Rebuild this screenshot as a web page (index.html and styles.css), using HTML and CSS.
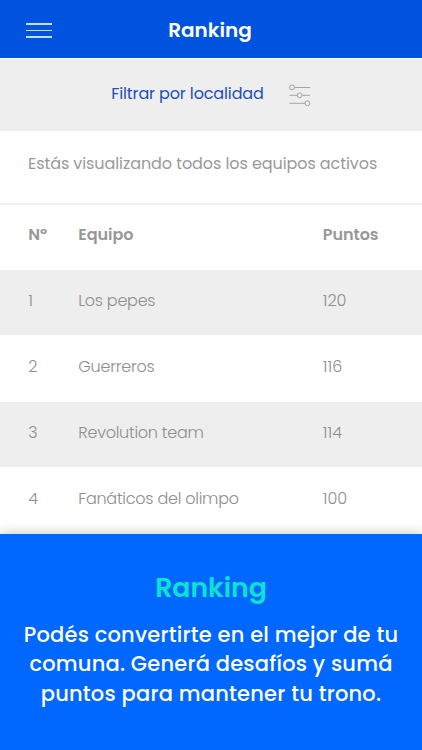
FILE: index.html
```html
<!DOCTYPE html>
<html lang="es">
<head>
  <meta charset="UTF-8" />
  <meta name="viewport" content="width=device-width, initial-scale=1.0" />
  <title>Ranking</title>
  <link rel="stylesheet" href="styles.css">
</head>
<body>

  <!-- HEADER -->
  <header class="topbar">
    <button class="menu-btn" aria-label="Menú">
      <span></span>
      <span></span>
      <span></span>
    </button>
    <h1>Ranking</h1>
  </header>

  <!-- FILTRO -->
  <div class="filter">
    <a href="#" class="filter-link">Filtrar por localidad</a>
    <svg class="filter-icon" width="22" height="22" viewBox="0 0 22 22" fill="none" stroke="#a4a4a4" stroke-width="1">
      <path d="M5.5 3.5H21M.5 11.3H8.2M13.2 11.3H21M.5 19.3H16" />
      <circle cx="3" cy="3.5" r="2.4" />
      <circle cx="10.7" cy="11.3" r="2.4" />
      <circle cx="18.4" cy="19.3" r="2.4" />
    </svg>
  </div>

  <p class="notice">Estás visualizando todos los equipos activos</p>

  <!-- TABLA DE EQUIPOS -->
  <div class="ranking">
    <div class="row head">
      <span>Nº</span>
      <span>Equipo</span>
      <span>Puntos</span>
    </div>
    <div class="row gris">
      <span>1</span>
      <span class="equipo">Los pepes</span>
      <span>120</span>
    </div>
    <div class="row">
      <span>2</span>
      <span class="equipo">Guerreros</span>
      <span>116</span>
    </div>
    <div class="row gris">
      <span>3</span>
      <span class="equipo">Revolution team</span>
      <span>114</span>
    </div>
    <div class="row">
      <span>4</span>
      <span class="equipo">Fanáticos del olimpo</span>
      <span>100</span>
    </div>
  </div>

  <!-- INFO -->
  <section class="info">
    <h2>Ranking</h2>
    <p>
      Podés convertirte en el mejor de tu<br>
      comuna. Generá desafíos y sumá<br>
      puntos para mantener tu trono.
    </p>
  </section>

</body>
</html>
```
FILE: styles.css
```css
* {
  box-sizing: border-box;
}

body {
  margin: 0;
  height: 750px;
  overflow: hidden;
  display: flex;
  flex-direction: column;
  background: #fff;
  color: #8e8e8e;
  font-family: Poppins, Inter, sans-serif;
  font-size: 16px;
  font-weight: 300;
}

h1, h2, p {
  margin: 0;
}

.topbar {
  height: 58px;
  flex: none;
  display: grid;
  grid-template-columns: 52px 1fr 54px;
  align-items: center;
  background: #0053df;
  color: #fff;
}

.menu-btn {
  display: flex;
  flex-direction: column;
  gap: 5px;
  width: 52px;
  padding: 3px 0 0 26px;
  border: none;
  background: none;
}

.menu-btn span {
  height: 1.5px;
  background: #c3dcff;
}

h1 {
  padding-top: 1px;
  font-size: 20px;
  font-weight: 600;
  line-height: 30px;
  text-align: center;
}

.filter {
  height: 72px;
  flex: none;
  margin-top: 1px;
  display: flex;
  justify-content: center;
  align-items: center;
  gap: 25px;
  background: #eee;
}

.filter-link {
  color: #1c50b8;
  font-weight: 400;
  letter-spacing: -0.13px;
  text-decoration: none;
  padding-bottom: 4px;
}

.notice {
  height: 74px;
  flex: none;
  padding: 20px 28px 0;
  color: #999;
  font-weight: 400;
  line-height: 25px;
  letter-spacing: -0.08px;
  white-space: nowrap;
  border-bottom: 2px solid #f0f0f0;
}

.row {
  display: grid;
  grid-template-columns: 50px 244.5px 1fr;
  align-items: center;
  height: 67px;
  padding: 0 0 5px 28.3px;
}

.head {
  height: 65px;
  padding-bottom: 7px;
  font-weight: 600;
  letter-spacing: -0.05px;
  color: #979797;
}

.equipo {
  letter-spacing: -0.25px;
}

.gris {
  height: 65px;
  background: #eee;
}

.info {
  position: relative;
  flex: 1;
  padding-top: 35px;
  background: #0068ff;
  box-shadow: 0 0 12px rgba(0, 0, 0, 0.25);
  color: #fff;
  text-align: center;
}

.info h2 {
  color: #0be3d0;
  font-size: 26.7px;
  font-weight: 600;
  line-height: 38px;
}

.info p {
  margin-top: 13px;
  font-size: 21px;
  font-weight: 500;
  line-height: 29.3px;
  letter-spacing: 0.2px;
  white-space: nowrap;
}
```
